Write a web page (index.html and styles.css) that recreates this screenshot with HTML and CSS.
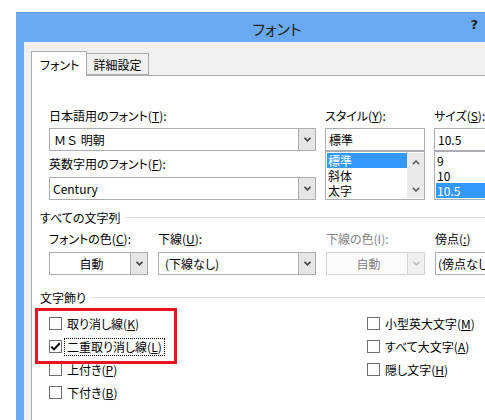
FILE: index.html
```html
<!DOCTYPE html>
<html lang="ja">
<head>
<meta charset="utf-8">
<title>フォント</title>
<link rel="stylesheet" href="styles.css">
</head>
<body>
<div class="window">
  <div class="titlebar">
    <span class="title">フォント</span>
    <span class="help">?</span>
  </div>
  <div class="client">
    <div class="tabs">
      <div class="tab active">フォント</div>
      <div class="tab">詳細設定</div>
    </div>
    <div class="panel">
      <div class="fontgrid">
        <div class="col">
          <span class="lbl">日本語用のフォント(<u>T</u>):</span>
          <div class="combo"><span class="ctext mono">ＭＳ 明朝</span><span class="btn"><svg width="7" height="5" viewBox="0 0 7 5"><polyline points="0.5,0.8 3.5,3.8 6.5,0.8" fill="none" stroke="#444" stroke-width="1.6"/></svg></span></div>
          <span class="lbl lbl2">英数字用のフォント(<u>F</u>):</span>
          <div class="combo"><span class="ctext">Century</span><span class="btn"><svg width="7" height="5" viewBox="0 0 7 5"><polyline points="0.5,0.8 3.5,3.8 6.5,0.8" fill="none" stroke="#444" stroke-width="1.6"/></svg></span></div>
        </div>
        <div class="col">
          <span class="lbl">スタイル(<u>Y</u>):</span>
          <div class="field">標準</div>
          <div class="list">
            <div class="items">
              <div class="item sel">標準</div>
              <div class="item">斜体</div>
              <div class="item">太字</div>
            </div>
            <div class="scroll">
              <svg width="8" height="5" viewBox="0 0 8 5"><polyline points="0.8,4.2 4,1 7.2,4.2" fill="none" stroke="#555" stroke-width="1.5"/></svg>
              <svg width="8" height="5" viewBox="0 0 8 5"><polyline points="0.8,0.8 4,4 7.2,0.8" fill="none" stroke="#555" stroke-width="1.5"/></svg>
            </div>
          </div>
        </div>
        <div class="col">
          <span class="lbl">サイズ(<u>S</u>):</span>
          <div class="field">10.5</div>
          <div class="list">
            <div class="items">
              <div class="item">9</div>
              <div class="item">10</div>
              <div class="item sel">10.5</div>
            </div>
          </div>
        </div>
      </div>

      <div class="section">すべての文字列</div>

      <div class="optgrid">
        <div class="col">
          <span class="lbl lbl3">フォントの色(<u>C</u>):</span>
          <div class="combo"><span class="ctext center">自動</span><span class="btn"><svg width="7" height="5" viewBox="0 0 7 5"><polyline points="0.5,0.8 3.5,3.8 6.5,0.8" fill="none" stroke="#444" stroke-width="1.6"/></svg></span></div>
        </div>
        <div class="col">
          <span class="lbl lbl3">下線(<u>U</u>):</span>
          <div class="combo"><span class="ctext wide">(下線なし)</span><span class="btn"><svg width="7" height="5" viewBox="0 0 7 5"><polyline points="0.5,0.8 3.5,3.8 6.5,0.8" fill="none" stroke="#444" stroke-width="1.6"/></svg></span></div>
        </div>
        <div class="col">
          <span class="lbl lbl3 disabled">下線の色(I):</span>
          <div class="combo off"><span class="ctext center">自動</span><span class="btn"><svg width="7" height="5" viewBox="0 0 7 5"><polyline points="0.5,0.8 3.5,3.8 6.5,0.8" fill="none" stroke="#BDBDBD" stroke-width="1.6"/></svg></span></div>
        </div>
        <div class="col">
          <span class="lbl lbl3">傍点(<u>:</u>)</span>
          <div class="combo"><span class="ctext tight">(傍点なし)</span></div>
        </div>
      </div>

      <div class="section deco">文字飾り</div>

      <div class="checks">
        <div class="col">
          <div class="check"><span class="box"></span><span class="ctl">取り消し線(<u>K</u>)</span></div>
          <div class="check"><span class="box"><svg width="11" height="11" viewBox="0 0 11 11"><polyline points="1.2,5.6 4,8.4 9.8,2.2" fill="none" stroke="#000" stroke-width="2"/></svg></span><span class="ctl focus">二重取り消し線(<u>L</u>)</span></div>
          <div class="check"><span class="box"></span><span class="ctl">上付き(<u>P</u>)</span></div>
          <div class="check"><span class="box"></span><span class="ctl">下付き(<u>B</u>)</span></div>
        </div>
        <div class="col">
          <div class="check"><span class="box"></span><span class="ctl">小型英大文字(<u>M</u>)</span></div>
          <div class="check"><span class="box"></span><span class="ctl">すべて大文字(<u>A</u>)</span></div>
          <div class="check"><span class="box"></span><span class="ctl">隠し文字(<u>H</u>)</span></div>
        </div>
      </div>
    </div>
  </div>
</div>
<div class="callout"></div>
</body>
</html>
```

FILE: styles.css
```css
* { box-sizing: border-box; }
html, body { margin: 0; }
body {
  width: 485px;
  height: 420px;
  overflow: hidden;
  position: relative;
  background: #fff;
  font-family: "Noto Sans CJK JP", "Noto Sans", sans-serif;
  font-size: 12px;
  color: #000;
  font-feature-settings: "palt";
}
u { text-decoration: underline; text-underline-offset: 1px; }

.window {
  margin: 12px 0 0 16px;
  width: 522px;
  height: 420px;
  background: #6AAAF2;
  border-top: 1px solid #5A98E2;
  padding: 0 8px;
}
.titlebar {
  height: 29px;
  margin: 0 -8px;
  display: grid;
  grid-template-columns: 1fr auto 1fr;
  align-items: center;
  padding-top: 2px;
}
.title { grid-column: 2; font-size: 15px; color: #222; }
.help {
  grid-column: 3;
  justify-self: end;
  margin-right: 60px;
  font-family: "DejaVu Sans", sans-serif;
  font-weight: bold;
  font-size: 13px;
  color: #222;
  margin-top: -8px;
}

.client {
  background: #F0F0F0;
  height: 400px;
  padding: 9px 0 0 7px;
}
.tabs { display: flex; align-items: flex-end; height: 24px; }
.tab {
  height: 22px;
  width: 62px;
  border: 1px solid #ACACAC;
  border-left: none;
  background: #F0F0F0;
  display: flex;
  align-items: center;
  justify-content: center;
}
.tab.active {
  height: 25px;
  width: 56px;
  border-left: 1px solid #ACACAC;
  border-bottom: none;
  background: #fff;
  margin-bottom: -1px;
  position: relative;
  z-index: 1;
  justify-content: flex-start;
  padding-left: 8px;
}

.panel {
  background: #fff;
  border: 1px solid #ACACAC;
  height: 360px;
  padding: 32px 0 0 8px;
}

.lbl {
  display: block;
  height: 16px;
  line-height: 16px;
  margin-bottom: 4px;
  white-space: nowrap;
}
.lbl2 { margin: 5px 0 5px; }
.lbl3 { margin-bottom: 5px; }
.disabled { color: #838383; }

.fontgrid {
  display: grid;
  grid-template-columns: 267px 100px 90px;
  column-gap: 9px;
  padding-left: 9px;
}
.combo {
  display: flex;
  height: 23px;
  border: 1px solid #ABADB3;
  background: #fff;
  white-space: nowrap;
  overflow: hidden;
}
.ctext { flex: 1; padding-left: 3px; line-height: 21px; overflow: hidden; }
.ctext.mono { padding-left: 4px; font-feature-settings: normal; }
.ctext.center { text-align: center; }
.ctext.wide { padding-left: 6px; }
.ctext.tight { padding-left: 2px; }
.btn {
  width: 17px;
  background: #E6E6E6;
  border-left: 1px solid #ACACAC;
  display: flex;
  align-items: center;
  justify-content: center;
}
.combo.off { border-color: #D5D5D5; background: #FBFBFB; color: #838383; }
.combo.off .btn { background: #F0F0F0; border-left-color: #D5D5D5; }

.field {
  height: 23px;
  border: 1px solid #ABADB3;
  padding-left: 3px;
  line-height: 21px;
  white-space: nowrap;
}
.list {
  display: flex;
  height: 49px;
  border: 1px solid #ABADB3;
}
.items { flex: 1; padding: 1px 0 0 1px; }
.item { height: 15px; line-height: 15px; padding-left: 1px; white-space: nowrap; }
.item.sel { background: #3399FF; color: #fff; }
.scroll {
  width: 17px;
  margin: 1px 0;
  background: #EAEAEA;
  display: flex;
  flex-direction: column;
  align-items: center;
  justify-content: space-between;
  padding: 7px 0 6px;
}
.scroll svg { display: block; }

.section {
  display: flex;
  align-items: center;
  gap: 5px;
  height: 16px;
  line-height: 16px;
  margin-top: 10px;
  white-space: nowrap;
}
.section::after {
  content: "";
  flex: 1;
  height: 1px;
  background: #DCDCDC;
  margin-top: -1px;
}
.section.deco { margin-top: 15px; }

.optgrid {
  display: grid;
  grid-template-columns: 99px 158px 99px 90px;
  column-gap: 10px;
  padding-left: 9px;
  margin-top: 5px;
}

.checks {
  display: grid;
  grid-template-columns: 318px 200px;
  padding-left: 9px;
  margin-top: 6px;
}
.check { display: flex; align-items: center; height: 23px; }
.box {
  width: 13px;
  height: 13px;
  border: 1px solid #707070;
  background: #fff;
  display: flex;
  align-items: center;
  justify-content: center;
}
.box svg { display: block; }
.ctl {
  margin-left: 2px;
  padding: 0 2px;
  border: 1px dotted transparent;
  line-height: 16px;
  white-space: nowrap;
}
.ctl.focus { border-color: #000; }

.callout {
  position: absolute;
  left: 35px;
  top: 308px;
  width: 142px;
  height: 56px;
  border: 3px solid #E5161F;
}
```
